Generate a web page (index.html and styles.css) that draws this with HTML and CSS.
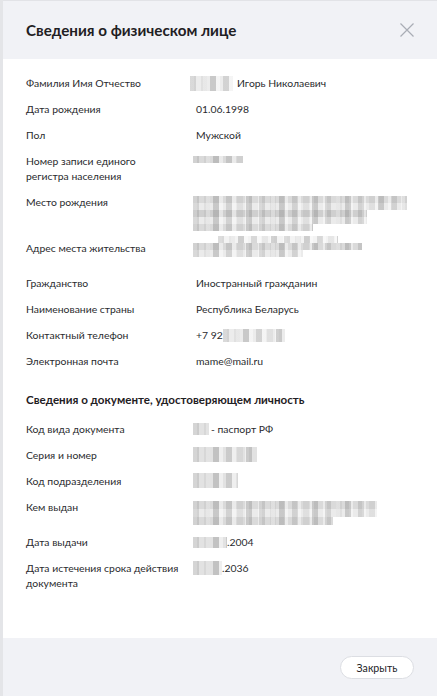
FILE: index.html
```html
<!DOCTYPE html>
<html lang="ru">
<head>
<meta charset="utf-8">
<title>Сведения о физическом лице</title>
<link rel="stylesheet" href="styles.css">
</head>
<body>
<div class="screen">
  <div class="backdrop"></div>
  <div class="modal">
    <header class="modal-head">
      <h1 class="modal-title">Сведения о физическом лице</h1>
      <button class="close" aria-label="Закрыть">
        <svg width="14" height="14" viewBox="0 0 14 14"><path d="M0.5 0.5 L13.5 13.5 M13.5 0.5 L0.5 13.5" stroke="#a9adb5" stroke-width="1.2" fill="none"/></svg>
      </button>
    </header>
    <div class="modal-body">
      <div class="fields">
        <div class="label">Фамилия Имя Отчество</div>
        <div class="value"><span class="blur blur-name"></span>Игорь Николаевич</div>

        <div class="label">Дата рождения</div>
        <div class="value">01.06.1998</div>

        <div class="label">Пол</div>
        <div class="value">Мужской</div>

        <div class="label">Номер записи единого<br>регистра населения</div>
        <div class="value"><div class="blur-stack stack-reg"><span class="bl w50 tone-m"></span></div></div>

        <div class="label">Место рождения</div>
        <div class="value h35"><div class="blur-stack stack-birth">
          <span class="bl w212 tone-m"></span>
          <span class="bl w212 tone-l"></span>
          <span class="bl w172 tone-d"></span>
          <span class="bl w172 tone-l"></span>
          <span class="bl w120 tone-m"></span>
        </div></div>

        <div class="label">Адрес места жительства</div>
        <div class="value h24"><div class="blur-stack stack-addr">
          <span class="bl w120 tone-f off25"></span>
          <span class="bl w168 tone-m"></span>
          <span class="bl w108 tone-l"></span>
        </div></div>

        <div class="label">Гражданство</div>
        <div class="value">Иностранный гражданин</div>

        <div class="label">Наименование страны</div>
        <div class="value">Республика Беларусь</div>

        <div class="label">Контактный телефон</div>
        <div class="value">+7 92<span class="blur blur-phone"></span></div>

        <div class="label">Электронная почта</div>
        <div class="value">mame@mail.ru</div>
      </div>

      <h2 class="section-title">Сведения о документе, удостоверяющем личность</h2>

      <div class="fields">
        <div class="label">Код вида документа</div>
        <div class="value"><span class="blur blur-code"></span>- паспорт РФ</div>

        <div class="label">Серия и номер</div>
        <div class="value"><span class="blur blur-series"></span></div>

        <div class="label">Код подразделения</div>
        <div class="value"><span class="blur blur-dept"></span></div>

        <div class="label">Кем выдан</div>
        <div class="value h24"><div class="blur-stack stack-issuer">
          <span class="bl w184 tone-m"></span>
          <span class="bl w184 tone-l"></span>
          <span class="bl w140 tone-m"></span>
        </div></div>

        <div class="label">Дата выдачи</div>
        <div class="value"><span class="blur blur-date"></span>.2004</div>

        <div class="label">Дата истечения срока действия<br>документа</div>
        <div class="value"><span class="blur blur-date2"></span>.2036</div>
      </div>
    </div>
    <footer class="modal-foot">
      <button class="btn">Закрыть</button>
    </footer>
  </div>
</div>
</body>
</html>
```

FILE: styles.css
```css
* { box-sizing: border-box; }

html, body {
  margin: 0;
  padding: 0;
  background: #ffffff;
}

body {
  font-family: Lato, "Noto Sans", "Liberation Sans", sans-serif;
  color: #222326;
}

.screen {
  display: flex;
  width: 437px;
  height: 696px;
  overflow: hidden;
}

.backdrop {
  width: 3px;
  flex: none;
  background: #e4e5e8;
}

.modal {
  flex: 1;
  display: flex;
  flex-direction: column;
  background: #ffffff;
}

.modal-head {
  height: 59px;
  flex: none;
  display: flex;
  align-items: center;
  justify-content: space-between;
  padding: 0 23px 0 23px;
  background: #f1f2f6;
  border-top: 1px solid #e2e3e7;
}

.modal-title {
  margin: 0;
  font-size: 15.2px;
  font-weight: 700;
  line-height: 20px;
  color: #1f2023;
}

.close {
  border: 0;
  padding: 0;
  margin: 0;
  background: transparent;
  width: 14px;
  height: 14px;
  display: block;
}
.close svg { display: block; }

.modal-body {
  flex: 1;
  padding: 17px 23px 0 23px;
}

.fields {
  display: grid;
  grid-template-columns: 170px 1fr;
  row-gap: 11px;
  font-size: 10.4px;
  line-height: 15px;
}

.label { color: #2a2b2e; }
.value { color: #2a2b2e; position: relative; }
.h35 { height: 35px; }
.h24 { height: 24px; }

.section-title {
  margin: 23px 0 14px 0;
  font-size: 11.6px;
  line-height: 16px;
  font-weight: 700;
  color: #1f2023;
}

/* pixelated placeholders for hidden data */
.blur, .bl {
  display: inline-block;
  vertical-align: middle;
  background-color: #e2e2e2;
  background-image:
    repeating-linear-gradient(90deg, rgba(120,120,120,.22) 0 6px, transparent 6px 11px, rgba(120,120,120,.10) 11px 17px, transparent 17px 20px, rgba(120,120,120,.30) 20px 26px, transparent 26px 33px),
    repeating-linear-gradient(90deg, rgba(255,255,255,.45) 0 4px, transparent 4px 13px);
}

.blur-name { width: 43px; height: 15px; margin: -2px 4px 0 -6px; background-color: #ececec; }
.blur-phone { width: 62px; height: 13px; margin: -2px 0 0 0; background-color: #ececec; }
.blur-code { width: 16px; height: 12px; margin: -2px 2px 0 -3px; }
.blur-series { width: 64px; height: 15px; margin: -3px 0 0 -3px; }
.blur-dept { width: 45px; height: 15px; margin: -3px 0 0 -3px; }
.blur-date { width: 34px; height: 11px; margin: -2px 0 0 -3px; }
.blur-date2 { width: 29px; height: 14px; margin: -3px 0 0 -3px; }

.blur-stack {
  display: flex;
  flex-direction: column;
  align-items: flex-start;
}
.bl { display: block; height: 7px; }
.stack-reg { margin: 2px 0 0 -3px; }
.stack-birth { margin: 1px 0 0 -3px; }
.stack-addr { margin: -5px 0 0 -3px; }
.stack-issuer { margin: 1px 0 0 -3px; }
.stack-issuer .bl { height: 8px; }

.w50 { width: 50px; }
.w108 { width: 110px; }
.w120 { width: 120px; }
.w140 { width: 140px; }
.w168 { width: 169px; }
.w172 { width: 174px; }
.w184 { width: 184px; }
.w212 { width: 214px; }
.off25 { margin-left: 25px; }

.tone-d { background-color: #cfcfcf; }
.tone-m { background-color: #dadada; }
.tone-l { background-color: #ebebeb; }
.tone-f { background-color: #f3f3f3; }

.modal-foot {
  height: 58px;
  flex: none;
  display: flex;
  align-items: center;
  justify-content: flex-end;
  padding: 0 23px;
  background: #f1f2f6;
}

.btn {
  width: 74px;
  height: 23px;
  border-radius: 12px;
  border: 1px solid #dcdee3;
  background: #ffffff;
  font-family: Lato, "Noto Sans", "Liberation Sans", sans-serif;
  font-size: 10.6px;
  color: #222326;
  padding: 0;
  margin-top: 1px;
}
```
